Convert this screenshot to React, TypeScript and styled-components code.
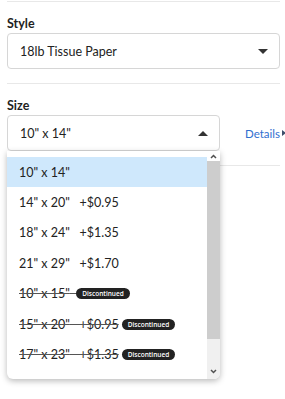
import React from 'react';
import styled, { createGlobalStyle } from 'styled-components';

const GlobalStyle = createGlobalStyle`
  html, body {
    margin: 0;
    padding: 0;
    background: #ffffff;
  }
  body {
    font-family: Lato, "Open Sans", Arial, sans-serif;
    color: #222222;
  }
`;

const Page = styled.div`
  width: 285px;
  height: 399px;
  padding: 1px 5px 0 7px;
  box-sizing: border-box;
  overflow: hidden;
`;

const Divider = styled.div`
  height: 1px;
  background: #e8e8e8;
`;

const Field = styled.div`
  display: flex;
  flex-direction: column;
  padding: 15px 0 14px;
`;

const Label = styled.div`
  font-size: 12.5px;
  font-weight: 700;
  line-height: 14px;
  margin-bottom: 2px;
  color: #1f1f1f;
`;

const FieldRow = styled.div`
  display: flex;
  align-items: center;
`;

const SelectWrap = styled.div<{ $width?: number }>`
  position: relative;
  flex-shrink: 0;
  width: ${p => (p.$width ? `${p.$width}px` : '100%')};
`;

const SelectBox = styled.div`
  height: 36px;
  box-sizing: border-box;
  border: 1px solid #d6d6d6;
  border-radius: 4px;
  display: flex;
  align-items: center;
  justify-content: space-between;
  padding: 0 11px 0 12px;
  font-size: 12.5px;
  color: #222;
  background: #fff;
`;

const Caret = styled.span<{ $up?: boolean }>`
  width: 0;
  height: 0;
  border-left: 5px solid transparent;
  border-right: 5px solid transparent;
  ${p =>
    p.$up
      ? 'border-bottom: 5px solid #333;'
      : 'border-top: 5px solid #333;'}
`;

const DetailsLink = styled.a`
  margin-left: 25px;
  font-size: 11.5px;
  color: #2f6fcf;
  text-decoration: none;
  display: flex;
  flex-shrink: 0;
  align-items: center;
  gap: 2px;
  white-space: nowrap;
`;

const LinkArrow = styled.span`
  flex-shrink: 0;
  width: 0;
  height: 0;
  border-top: 3.5px solid transparent;
  border-bottom: 3.5px solid transparent;
  border-left: 4px solid #3d4f6b;
`;

const Dropdown = styled.div`
  position: absolute;
  top: 36px;
  left: 0;
  width: 213px;
  height: 228px;
  background: #fff;
  border-radius: 0 0 6px 6px;
  box-shadow: 0 2px 6px rgba(0, 0, 0, 0.28);
  display: flex;
  overflow: hidden;
  z-index: 2;
`;

const Options = styled.ul`
  list-style: none;
  margin: 0;
  padding: 6px 0 0;
  flex: 1;
`;

const Option = styled.li<{ $active?: boolean }>`
  height: 30.4px;
  display: flex;
  align-items: center;
  padding-left: 12px;
  font-size: 12.5px;
  white-space: nowrap;
  background: ${p => (p.$active ? '#cfe8fc' : 'transparent')};
`;

const OptionText = styled.span<{ $struck?: boolean }>`
  text-decoration: ${p => (p.$struck ? 'line-through' : 'none')};
  text-decoration-color: #555;
`;

const Badge = styled.span<{ $gap: number }>`
  margin-left: ${p => p.$gap}px;
  background: #222;
  color: #fff;
  font-size: 6.5px;
  font-weight: 600;
  height: 11px;
  line-height: 11px;
  padding: 0 6px;
  border-radius: 6px;
  font-family: "Open Sans", Arial, sans-serif;
`;

const Scrollbar = styled.div`
  width: 13px;
  display: flex;
  flex-direction: column;
  background: #f0f0f0;
`;

const ScrollButton = styled.div<{ $bg: string }>`
  height: 10px;
  display: flex;
  align-items: center;
  justify-content: center;
  background: ${p => p.$bg};
`;

const Thumb = styled.div`
  height: 178px;
  background: #cdcdcd;
`;

const Track = styled.div`
  flex: 1;
`;

const Chevron: React.FC<{ up?: boolean }> = ({ up }) => (
  <svg width="7" height="5" viewBox="0 0 7 5">
    <path
      d={up ? 'M1 4 L3.5 1.5 L6 4' : 'M1 1 L3.5 3.5 L6 1'}
      fill="none"
      stroke="#505050"
      strokeWidth="1.5"
    />
  </svg>
);

const sizes = [
  { size: '10" x 14"' },
  { size: '14" x 20"', price: '+$0.95' },
  { size: '18" x 24"', price: '+$1.35' },
  { size: '21" x 29"', price: '+$1.70' },
  { size: '10" x 15"', discontinued: true },
  { size: '15" x 20"', price: '+$0.95', discontinued: true },
  { size: '17" x 23"', price: '+$1.35', discontinued: true },
];

const App: React.FC = () => {
  return (
    <>
      <GlobalStyle />
      <Page>
        <Divider />
        <Field>
          <Label>Style</Label>
          <SelectBox>
            18lb Tissue Paper
            <Caret />
          </SelectBox>
        </Field>
        <Divider />
        <Field>
          <Label>Size</Label>
          <FieldRow>
            <SelectWrap $width={213}>
              <SelectBox>
                10" x 14"
                <Caret $up />
              </SelectBox>
              <Dropdown>
                <Options>
                  {sizes.map((s, i) => (
                    <Option key={i} $active={i === 0}>
                      <OptionText $struck={s.discontinued}>
                        {s.size}
                        {s.price
                          ? '\u00a0\u00a0\u00a0' + s.price
                          : s.discontinued
                          ? '\u00a0\u00a0'
                          : ''}
                      </OptionText>
                      {s.discontinued && (
                        <Badge $gap={s.price ? 3 : 0}>Discontinued</Badge>
                      )}
                    </Option>
                  ))}
                </Options>
                <Scrollbar>
                  <ScrollButton $bg="#ffffff">
                    <Chevron up />
                  </ScrollButton>
                  <Thumb />
                  <Track />
                  <ScrollButton $bg="#f0f0f0" style={{ marginBottom: 3 }}>
                    <Chevron />
                  </ScrollButton>
                </Scrollbar>
              </Dropdown>
            </SelectWrap>
            <DetailsLink>
              Details
              <LinkArrow />
            </DetailsLink>
          </FieldRow>
        </Field>
        <Divider />
      </Page>
    </>
  );
};

export default App;
